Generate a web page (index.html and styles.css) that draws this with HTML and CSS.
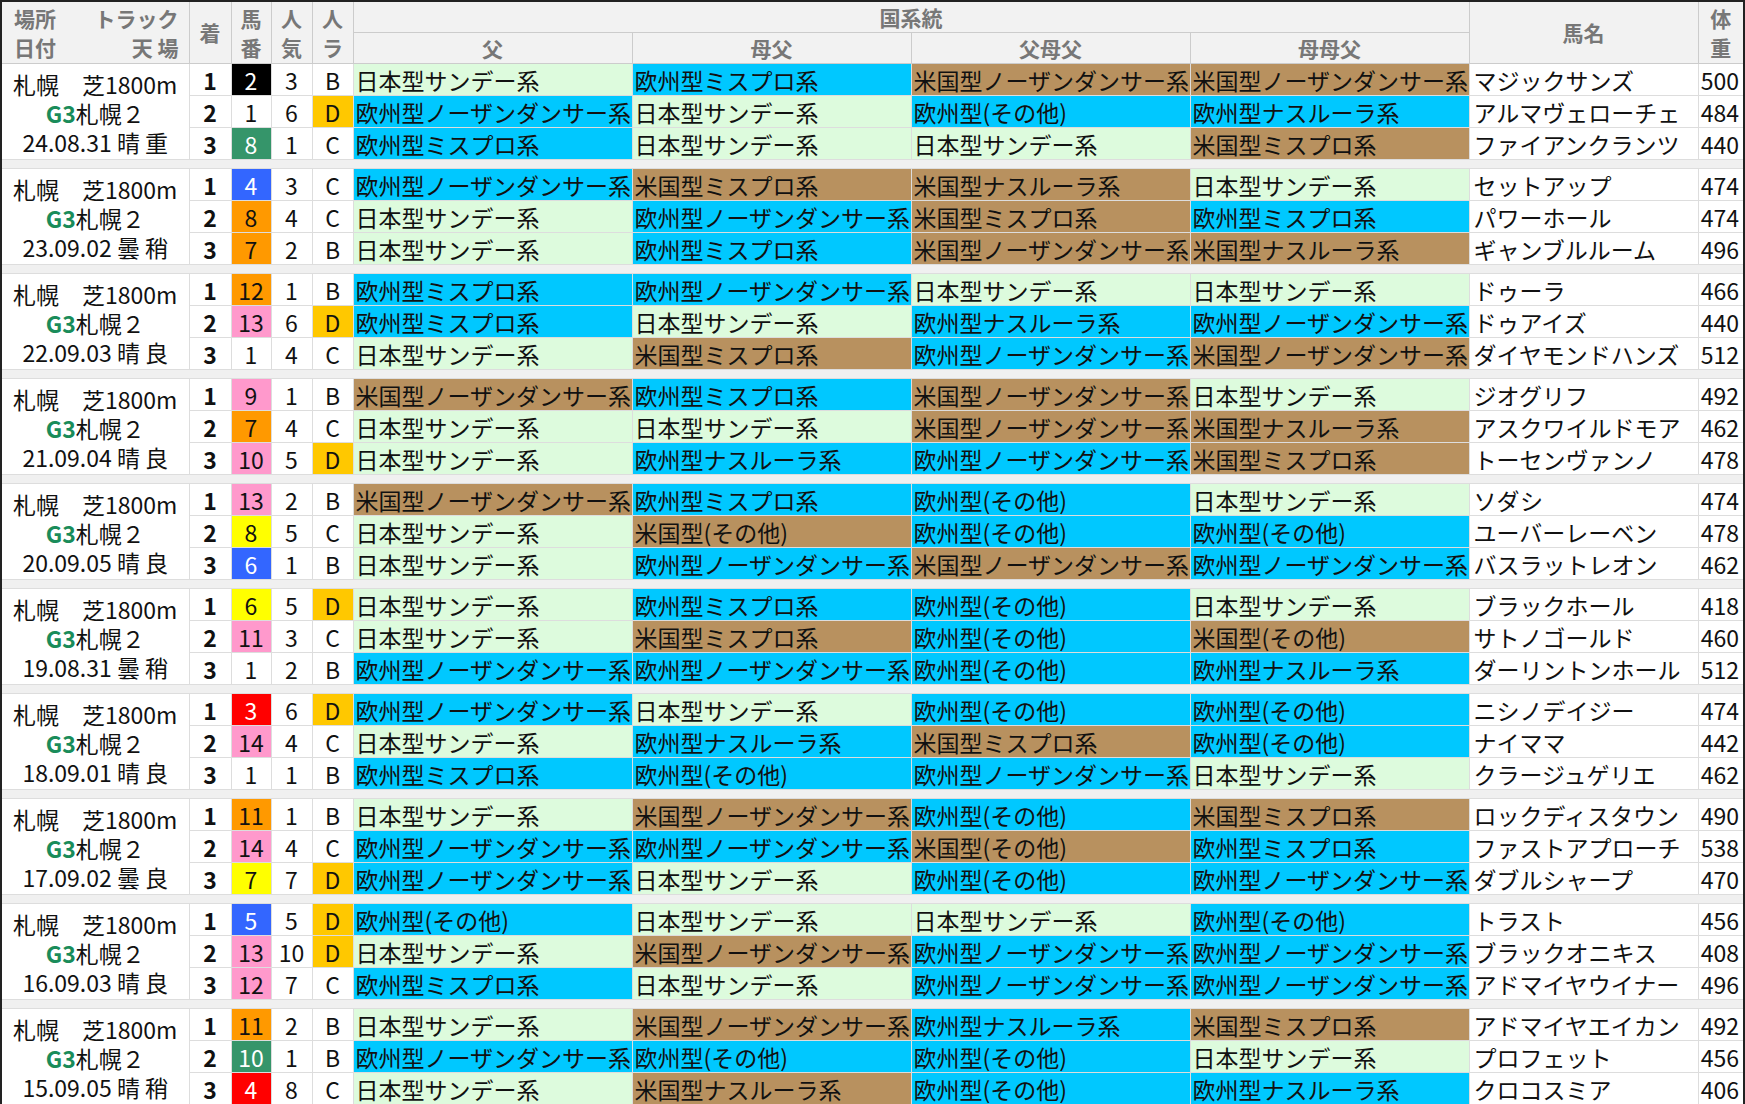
FILE: index.html
```html
<!DOCTYPE html>
<html lang="ja">
<head>
<meta charset="utf-8">
<title>札幌２歳ステークス 国系統</title>
<link rel="stylesheet" href="styles.css">
</head>
<body>
<table class="tbl">
<colgroup>
<col class="c-race"><col class="c-rank"><col class="c-num"><col class="c-pop"><col class="c-rate">
<col class="c-ped"><col class="c-ped"><col class="c-ped"><col class="c-ped">
<col class="c-name"><col class="c-wt">
</colgroup>
<thead>
<tr class="h1">
<th rowspan="2" class="h-race"><div class="hr"><span>場所</span><span>トラック</span></div><div class="hr"><span>日付</span><span>天 場</span></div></th>
<th rowspan="2">着</th>
<th rowspan="2" class="h-two">馬<br>番</th>
<th rowspan="2" class="h-two">人<br>気</th>
<th rowspan="2" class="h-two">人<br>ラ</th>
<th colspan="4">国系統</th>
<th rowspan="2">馬名</th>
<th rowspan="2" class="h-two">体<br>重</th>
</tr>
<tr class="h2">
<th>父</th><th>母父</th><th>父母父</th><th>母母父</th>
</tr>
</thead>
<tbody>
<!-- 2024 -->
<tr><td rowspan="3" class="race">札幌　芝1800m<br><b class="g">G3</b>札幌２<br>24.08.31 晴 重</td>
<td class="rk">1</td><td class="no bk">2</td><td class="pp">3</td><td class="rt">B</td>
<td class="pd j">日本型サンデー系</td><td class="pd e">欧州型ミスプロ系</td><td class="pd a">米国型ノーザンダンサー系</td><td class="pd a">米国型ノーザンダンサー系</td><td class="nm">マジックサンズ</td><td class="wt">500</td></tr>
<tr><td class="rk">2</td><td class="no">1</td><td class="pp">6</td><td class="rt d">D</td>
<td class="pd e">欧州型ノーザンダンサー系</td><td class="pd j">日本型サンデー系</td><td class="pd e">欧州型(その他)</td><td class="pd e">欧州型ナスルーラ系</td><td class="nm">アルマヴェローチェ</td><td class="wt">484</td></tr>
<tr class="last"><td class="rk">3</td><td class="no gr">8</td><td class="pp">1</td><td class="rt">C</td>
<td class="pd e">欧州型ミスプロ系</td><td class="pd j">日本型サンデー系</td><td class="pd j">日本型サンデー系</td><td class="pd a">米国型ミスプロ系</td><td class="nm">ファイアンクランツ</td><td class="wt">440</td></tr>
<tr class="sep"><td colspan="11"></td></tr>
<!-- 2023 -->
<tr><td rowspan="3" class="race">札幌　芝1800m<br><b class="g">G3</b>札幌２<br>23.09.02 曇 稍</td>
<td class="rk">1</td><td class="no bl">4</td><td class="pp">3</td><td class="rt">C</td>
<td class="pd e">欧州型ノーザンダンサー系</td><td class="pd a">米国型ミスプロ系</td><td class="pd a">米国型ナスルーラ系</td><td class="pd j">日本型サンデー系</td><td class="nm">セットアップ</td><td class="wt">474</td></tr>
<tr><td class="rk">2</td><td class="no or">8</td><td class="pp">4</td><td class="rt">C</td>
<td class="pd j">日本型サンデー系</td><td class="pd e">欧州型ノーザンダンサー系</td><td class="pd a">米国型ミスプロ系</td><td class="pd e">欧州型ミスプロ系</td><td class="nm">パワーホール</td><td class="wt">474</td></tr>
<tr class="last"><td class="rk">3</td><td class="no or">7</td><td class="pp">2</td><td class="rt">B</td>
<td class="pd j">日本型サンデー系</td><td class="pd e">欧州型ミスプロ系</td><td class="pd a">米国型ノーザンダンサー系</td><td class="pd a">米国型ナスルーラ系</td><td class="nm">ギャンブルルーム</td><td class="wt">496</td></tr>
<tr class="sep"><td colspan="11"></td></tr>
<!-- 2022 -->
<tr><td rowspan="3" class="race">札幌　芝1800m<br><b class="g">G3</b>札幌２<br>22.09.03 晴 良</td>
<td class="rk">1</td><td class="no or">12</td><td class="pp">1</td><td class="rt">B</td>
<td class="pd e">欧州型ミスプロ系</td><td class="pd e">欧州型ノーザンダンサー系</td><td class="pd j">日本型サンデー系</td><td class="pd j">日本型サンデー系</td><td class="nm">ドゥーラ</td><td class="wt">466</td></tr>
<tr><td class="rk">2</td><td class="no pk">13</td><td class="pp">6</td><td class="rt d">D</td>
<td class="pd e">欧州型ミスプロ系</td><td class="pd j">日本型サンデー系</td><td class="pd e">欧州型ナスルーラ系</td><td class="pd e">欧州型ノーザンダンサー系</td><td class="nm">ドゥアイズ</td><td class="wt">440</td></tr>
<tr class="last"><td class="rk">3</td><td class="no">1</td><td class="pp">4</td><td class="rt">C</td>
<td class="pd j">日本型サンデー系</td><td class="pd a">米国型ミスプロ系</td><td class="pd e">欧州型ノーザンダンサー系</td><td class="pd a">米国型ノーザンダンサー系</td><td class="nm">ダイヤモンドハンズ</td><td class="wt">512</td></tr>
<tr class="sep"><td colspan="11"></td></tr>
<!-- 2021 -->
<tr><td rowspan="3" class="race">札幌　芝1800m<br><b class="g">G3</b>札幌２<br>21.09.04 晴 良</td>
<td class="rk">1</td><td class="no pk">9</td><td class="pp">1</td><td class="rt">B</td>
<td class="pd a">米国型ノーザンダンサー系</td><td class="pd e">欧州型ミスプロ系</td><td class="pd a">米国型ノーザンダンサー系</td><td class="pd j">日本型サンデー系</td><td class="nm">ジオグリフ</td><td class="wt">492</td></tr>
<tr><td class="rk">2</td><td class="no or">7</td><td class="pp">4</td><td class="rt">C</td>
<td class="pd j">日本型サンデー系</td><td class="pd j">日本型サンデー系</td><td class="pd a">米国型ノーザンダンサー系</td><td class="pd a">米国型ナスルーラ系</td><td class="nm">アスクワイルドモア</td><td class="wt">462</td></tr>
<tr class="last"><td class="rk">3</td><td class="no pk">10</td><td class="pp">5</td><td class="rt d">D</td>
<td class="pd j">日本型サンデー系</td><td class="pd e">欧州型ナスルーラ系</td><td class="pd e">欧州型ノーザンダンサー系</td><td class="pd a">米国型ミスプロ系</td><td class="nm">トーセンヴァンノ</td><td class="wt">478</td></tr>
<tr class="sep"><td colspan="11"></td></tr>
<!-- 2020 -->
<tr><td rowspan="3" class="race">札幌　芝1800m<br><b class="g">G3</b>札幌２<br>20.09.05 晴 良</td>
<td class="rk">1</td><td class="no pk">13</td><td class="pp">2</td><td class="rt">B</td>
<td class="pd a">米国型ノーザンダンサー系</td><td class="pd e">欧州型ミスプロ系</td><td class="pd e">欧州型(その他)</td><td class="pd j">日本型サンデー系</td><td class="nm">ソダシ</td><td class="wt">474</td></tr>
<tr><td class="rk">2</td><td class="no ye">8</td><td class="pp">5</td><td class="rt">C</td>
<td class="pd j">日本型サンデー系</td><td class="pd a">米国型(その他)</td><td class="pd e">欧州型(その他)</td><td class="pd e">欧州型(その他)</td><td class="nm">ユーバーレーベン</td><td class="wt">478</td></tr>
<tr class="last"><td class="rk">3</td><td class="no bl">6</td><td class="pp">1</td><td class="rt">B</td>
<td class="pd j">日本型サンデー系</td><td class="pd e">欧州型ノーザンダンサー系</td><td class="pd a">米国型ノーザンダンサー系</td><td class="pd e">欧州型ノーザンダンサー系</td><td class="nm">バスラットレオン</td><td class="wt">462</td></tr>
<tr class="sep"><td colspan="11"></td></tr>
<!-- 2019 -->
<tr><td rowspan="3" class="race">札幌　芝1800m<br><b class="g">G3</b>札幌２<br>19.08.31 曇 稍</td>
<td class="rk">1</td><td class="no ye">6</td><td class="pp">5</td><td class="rt d">D</td>
<td class="pd j">日本型サンデー系</td><td class="pd e">欧州型ミスプロ系</td><td class="pd e">欧州型(その他)</td><td class="pd j">日本型サンデー系</td><td class="nm">ブラックホール</td><td class="wt">418</td></tr>
<tr><td class="rk">2</td><td class="no pk">11</td><td class="pp">3</td><td class="rt">C</td>
<td class="pd j">日本型サンデー系</td><td class="pd a">米国型ミスプロ系</td><td class="pd e">欧州型(その他)</td><td class="pd a">米国型(その他)</td><td class="nm">サトノゴールド</td><td class="wt">460</td></tr>
<tr class="last"><td class="rk">3</td><td class="no">1</td><td class="pp">2</td><td class="rt">B</td>
<td class="pd e">欧州型ノーザンダンサー系</td><td class="pd e">欧州型ノーザンダンサー系</td><td class="pd e">欧州型(その他)</td><td class="pd e">欧州型ナスルーラ系</td><td class="nm">ダーリントンホール</td><td class="wt">512</td></tr>
<tr class="sep"><td colspan="11"></td></tr>
<!-- 2018 -->
<tr><td rowspan="3" class="race">札幌　芝1800m<br><b class="g">G3</b>札幌２<br>18.09.01 晴 良</td>
<td class="rk">1</td><td class="no rd">3</td><td class="pp">6</td><td class="rt d">D</td>
<td class="pd e">欧州型ノーザンダンサー系</td><td class="pd j">日本型サンデー系</td><td class="pd e">欧州型(その他)</td><td class="pd e">欧州型(その他)</td><td class="nm">ニシノデイジー</td><td class="wt">474</td></tr>
<tr><td class="rk">2</td><td class="no pk">14</td><td class="pp">4</td><td class="rt">C</td>
<td class="pd j">日本型サンデー系</td><td class="pd e">欧州型ナスルーラ系</td><td class="pd a">米国型ミスプロ系</td><td class="pd e">欧州型(その他)</td><td class="nm">ナイママ</td><td class="wt">442</td></tr>
<tr class="last"><td class="rk">3</td><td class="no">1</td><td class="pp">1</td><td class="rt">B</td>
<td class="pd e">欧州型ミスプロ系</td><td class="pd e">欧州型(その他)</td><td class="pd e">欧州型ノーザンダンサー系</td><td class="pd j">日本型サンデー系</td><td class="nm">クラージュゲリエ</td><td class="wt">462</td></tr>
<tr class="sep"><td colspan="11"></td></tr>
<!-- 2017 -->
<tr><td rowspan="3" class="race">札幌　芝1800m<br><b class="g">G3</b>札幌２<br>17.09.02 曇 良</td>
<td class="rk">1</td><td class="no or">11</td><td class="pp">1</td><td class="rt">B</td>
<td class="pd j">日本型サンデー系</td><td class="pd a">米国型ノーザンダンサー系</td><td class="pd e">欧州型(その他)</td><td class="pd a">米国型ミスプロ系</td><td class="nm">ロックディスタウン</td><td class="wt">490</td></tr>
<tr><td class="rk">2</td><td class="no pk">14</td><td class="pp">4</td><td class="rt">C</td>
<td class="pd e">欧州型ノーザンダンサー系</td><td class="pd e">欧州型ノーザンダンサー系</td><td class="pd a">米国型(その他)</td><td class="pd e">欧州型ミスプロ系</td><td class="nm">ファストアプローチ</td><td class="wt">538</td></tr>
<tr class="last"><td class="rk">3</td><td class="no ye">7</td><td class="pp">7</td><td class="rt d">D</td>
<td class="pd e">欧州型ノーザンダンサー系</td><td class="pd j">日本型サンデー系</td><td class="pd e">欧州型(その他)</td><td class="pd e">欧州型ノーザンダンサー系</td><td class="nm">ダブルシャープ</td><td class="wt">470</td></tr>
<tr class="sep"><td colspan="11"></td></tr>
<!-- 2016 -->
<tr><td rowspan="3" class="race">札幌　芝1800m<br><b class="g">G3</b>札幌２<br>16.09.03 晴 良</td>
<td class="rk">1</td><td class="no bl">5</td><td class="pp">5</td><td class="rt d">D</td>
<td class="pd e">欧州型(その他)</td><td class="pd j">日本型サンデー系</td><td class="pd j">日本型サンデー系</td><td class="pd e">欧州型(その他)</td><td class="nm">トラスト</td><td class="wt">456</td></tr>
<tr><td class="rk">2</td><td class="no pk">13</td><td class="pp">10</td><td class="rt d">D</td>
<td class="pd j">日本型サンデー系</td><td class="pd a">米国型ノーザンダンサー系</td><td class="pd e">欧州型ノーザンダンサー系</td><td class="pd e">欧州型ノーザンダンサー系</td><td class="nm">ブラックオニキス</td><td class="wt">408</td></tr>
<tr class="last"><td class="rk">3</td><td class="no pk">12</td><td class="pp">7</td><td class="rt">C</td>
<td class="pd e">欧州型ミスプロ系</td><td class="pd j">日本型サンデー系</td><td class="pd e">欧州型ノーザンダンサー系</td><td class="pd e">欧州型ノーザンダンサー系</td><td class="nm">アドマイヤウイナー</td><td class="wt">496</td></tr>
<tr class="sep"><td colspan="11"></td></tr>
<!-- 2015 -->
<tr><td rowspan="3" class="race">札幌　芝1800m<br><b class="g">G3</b>札幌２<br>15.09.05 晴 稍</td>
<td class="rk">1</td><td class="no or">11</td><td class="pp">2</td><td class="rt">B</td>
<td class="pd j">日本型サンデー系</td><td class="pd a">米国型ノーザンダンサー系</td><td class="pd e">欧州型ナスルーラ系</td><td class="pd a">米国型ミスプロ系</td><td class="nm">アドマイヤエイカン</td><td class="wt">492</td></tr>
<tr><td class="rk">2</td><td class="no gr">10</td><td class="pp">1</td><td class="rt">B</td>
<td class="pd e">欧州型ノーザンダンサー系</td><td class="pd e">欧州型(その他)</td><td class="pd e">欧州型(その他)</td><td class="pd j">日本型サンデー系</td><td class="nm">プロフェット</td><td class="wt">456</td></tr>
<tr class="last"><td class="rk">3</td><td class="no rd">4</td><td class="pp">8</td><td class="rt">C</td>
<td class="pd j">日本型サンデー系</td><td class="pd a">米国型ナスルーラ系</td><td class="pd e">欧州型(その他)</td><td class="pd e">欧州型ナスルーラ系</td><td class="nm">クロコスミア</td><td class="wt">406</td></tr>
</tbody>
</table>
</body>
</html>
```

FILE: styles.css
```css
html, body {
  margin: 0;
  padding: 0;
  background: #ffffff;
}

body {
  font-family: "Noto Sans CJK JP", "Noto Sans", sans-serif;
  color: #111111;
}

.tbl {
  border-collapse: collapse;
  table-layout: fixed;
  width: 1745px;
  border: 2px solid #222222;
  font-size: 23px;
}

.c-race { width: 188px; }
.c-rank { width: 42px; }
.c-num { width: 40px; }
.c-pop { width: 41px; }
.c-rate { width: 41px; }
.c-ped { width: 279px; }
.c-name { width: 229px; }
.c-wt { width: 46px; }

th {
  background: #f2f2f2;
  color: #777777;
  font-weight: bold;
  font-size: 21px;
  border: 1px solid #cccccc;
  padding: 0;
  line-height: 29px;
  text-align: center;
}

.h1 th { height: 30px; }
.h2 th { height: 30px; }

.h-race {
  padding: 0 10px 0 12px;
}

.hr {
  display: flex;
  justify-content: space-between;
  line-height: 29px;
}

td {
  border: 1px solid #dddddd;
  padding: 0;
  height: 31px;
  line-height: 30px;
  white-space: nowrap;
  overflow: hidden;
}

.race {
  text-align: center;
  vertical-align: middle;
  line-height: 29px;
  padding-top: 4px;
}

.g {
  color: #1a8c5a;
  font-weight: bold;
}

.rk {
  text-align: center;
  font-weight: bold;
}

.no, .pp, .rt {
  text-align: center;
}

.pd {
  padding-left: 2px;
}

.nm {
  padding-left: 4px;
}

.wt {
  text-align: right;
  padding-right: 4px;
}

.j { background: #ddfbdd; }
.e { background: #00c8ff; }
.a { background: #b8915f; }
.d { background: #ffc800; }

.bk { background: #000000; color: #ffffff; }
.gr { background: #35956a; color: #ffffff; }
.bl { background: #3366ff; color: #ffffff; }
.rd { background: #ff0000; color: #ffffff; }
.or { background: #ff9900; }
.pk { background: #ff99cc; }
.ye { background: #ffff00; }

.sep td {
  height: 8px;
  line-height: 8px;
  background: #f0f0f0;
  border-left: none;
  border-right: none;
}
```
